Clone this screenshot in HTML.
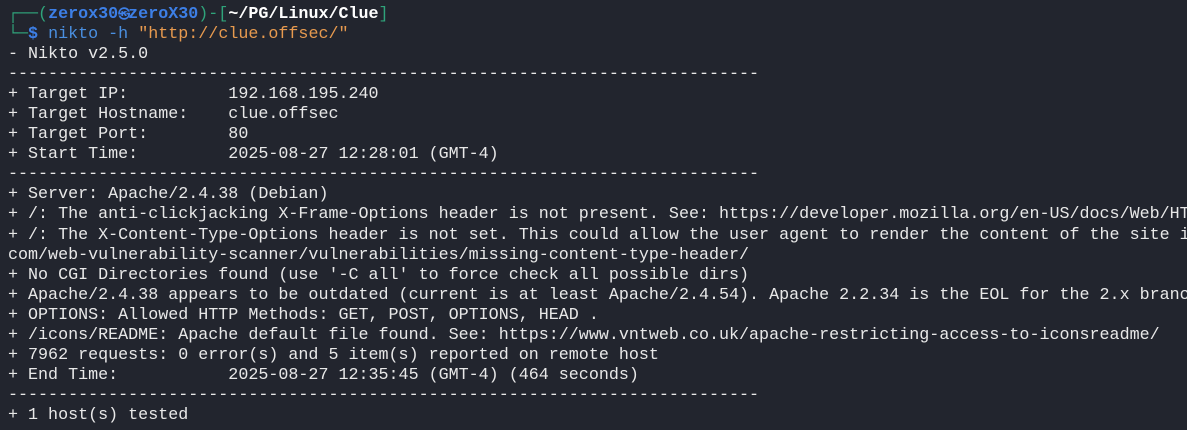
<!DOCTYPE html>
<html><head><meta charset="utf-8"><style>
html,body{margin:0;padding:0;background:#22252e;width:1187px;height:430px;overflow:hidden}
pre{margin:0;padding:5px 0 0 8px;font-family:"Liberation Mono","DejaVu Sans Mono",monospace;font-size:16.7px;line-height:20.05px;color:#e8e8e8;white-space:pre;overflow:hidden;width:1179px}
.g{color:#2fa37a}.b{color:#3d7fe6;font-weight:bold}.w{color:#fff;font-weight:bold}.c{color:#4a8fe0}.o{color:#e79a4f}
.k{display:inline-block;width:10px;font-size:12px;text-align:center}
</style></head><body><pre><span class="g">┌──(</span><span class="b">zerox30<span class="k">㉿</span>zeroX30</span><span class="g">)-[</span><span class="w">~/PG/Linux/Clue</span><span class="g">]</span>
<span class="g">└─</span><span class="b">$</span> <span class="c">nikto -h</span> <span class="o">"http://clue.offsec/"</span>
- Nikto v2.5.0
---------------------------------------------------------------------------
+ Target IP:          192.168.195.240
+ Target Hostname:    clue.offsec
+ Target Port:        80
+ Start Time:         2025-08-27 12:28:01 (GMT-4)
---------------------------------------------------------------------------
+ Server: Apache/2.4.38 (Debian)
+ /: The anti-clickjacking X-Frame-Options header is not present. See: https://developer.mozilla.org/en-US/docs/Web/HT
+ /: The X-Content-Type-Options header is not set. This could allow the user agent to render the content of the site i
com/web-vulnerability-scanner/vulnerabilities/missing-content-type-header/
+ No CGI Directories found (use '-C all' to force check all possible dirs)
+ Apache/2.4.38 appears to be outdated (current is at least Apache/2.4.54). Apache 2.2.34 is the EOL for the 2.x branc
+ OPTIONS: Allowed HTTP Methods: GET, POST, OPTIONS, HEAD .
+ /icons/README: Apache default file found. See: https://www.vntweb.co.uk/apache-restricting-access-to-iconsreadme/
+ 7962 requests: 0 error(s) and 5 item(s) reported on remote host
+ End Time:           2025-08-27 12:35:45 (GMT-4) (464 seconds)
---------------------------------------------------------------------------
+ 1 host(s) tested</pre></body></html>
